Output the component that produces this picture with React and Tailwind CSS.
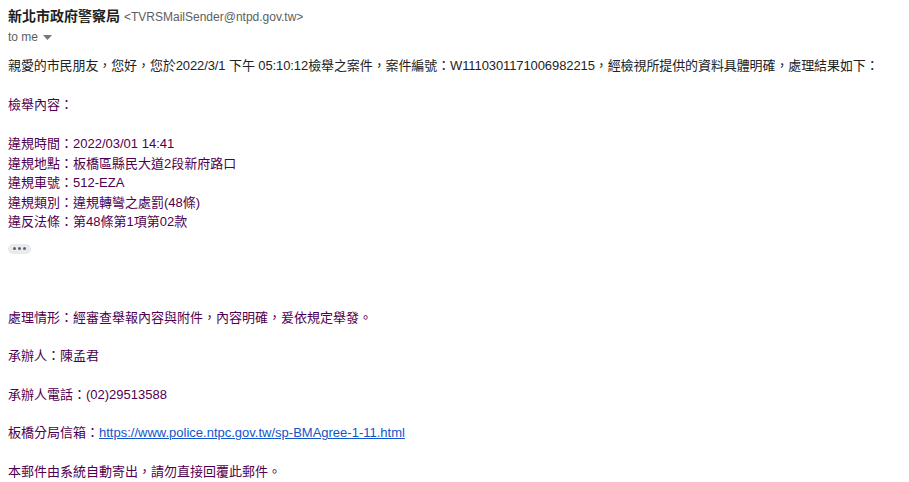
import React from 'react';

const details = [
  ['違規時間：', '2022/03/01 14:41'],
  ['違規地點：', '板橋區縣民大道2段新府路口'],
  ['違規車號：', '512-EZA'],
  ['違規類別：', '違規轉彎之處罰(48條)'],
  ['違反法條：', '第48條第1項第02款'],
];

export default function App() {
  return (
    <div
      className="w-[909px] h-[482px] overflow-hidden bg-white px-2 pt-[6px]"
      style={{ fontFamily: '"Liberation Sans", Arial, "Noto Sans CJK TC", sans-serif' }}
    >
      {/* Header */}
      <div className="flex items-baseline gap-1 leading-5">
        <span className="text-[14px] font-bold text-[#1f1f1f]">新北市政府警察局</span>
        <span className="text-[12px] text-[#5e5e5e]">&lt;TVRSMailSender@ntpd.gov.tw&gt;</span>
      </div>
      <div className="flex items-center gap-[5px] leading-5 text-[12px] text-[#5e5e5e]">
        <span>to me</span>
        <svg width="9" height="5" viewBox="0 0 9 5" className="mt-[1px]">
          <path d="M0 0h9L4.5 5z" fill="#777" />
        </svg>
      </div>

      {/* Body */}
      <div className="mt-[9px] text-[13px] leading-[19.5px]">
        <p className="text-[#222222] whitespace-nowrap tracking-[-0.1px]">
          親愛的市民朋友，您好，您於2022/3/1 下午 05:10:12檢舉之案件，案件編號：W1110301171006982215，經檢視所提供的資料具體明確，處理結果如下：
        </p>
        <p className="text-[#222222]">&nbsp;</p>
        <div className="text-[#500050]">
          <p>檢舉內容：</p>
          <p>&nbsp;</p>
          {details.map(([k, v]) => (
            <p key={k}>
              {k}
              {v}
            </p>
          ))}
        </div>

        <div className="mt-[12px] w-[23px] h-[10px] rounded-full bg-[#e8eaed] flex items-center justify-center gap-[2px]">
          <span className="w-[3px] h-[3px] rounded-full bg-[#5f6368]" />
          <span className="w-[3px] h-[3px] rounded-full bg-[#5f6368]" />
          <span className="w-[3px] h-[3px] rounded-full bg-[#5f6368]" />
        </div>

        <div className="mt-[54px] text-[#500050] leading-[19.3px]">
          <p>處理情形：經審查舉報內容與附件，內容明確，爰依規定舉發。</p>
          <p>&nbsp;</p>
          <p>承辦人：陳孟君</p>
          <p>&nbsp;</p>
          <p>承辦人電話：(02)29513588</p>
          <p>&nbsp;</p>
          <p>
            板橋分局信箱：
            <a href="#" className="text-[#1155cc] underline">
              https://www.police.ntpc.gov.tw/sp-BMAgree-1-11.html
            </a>
          </p>
          <p>&nbsp;</p>
          <p>本郵件由系統自動寄出，請勿直接回覆此郵件。</p>
        </div>
      </div>
    </div>
  );
}
